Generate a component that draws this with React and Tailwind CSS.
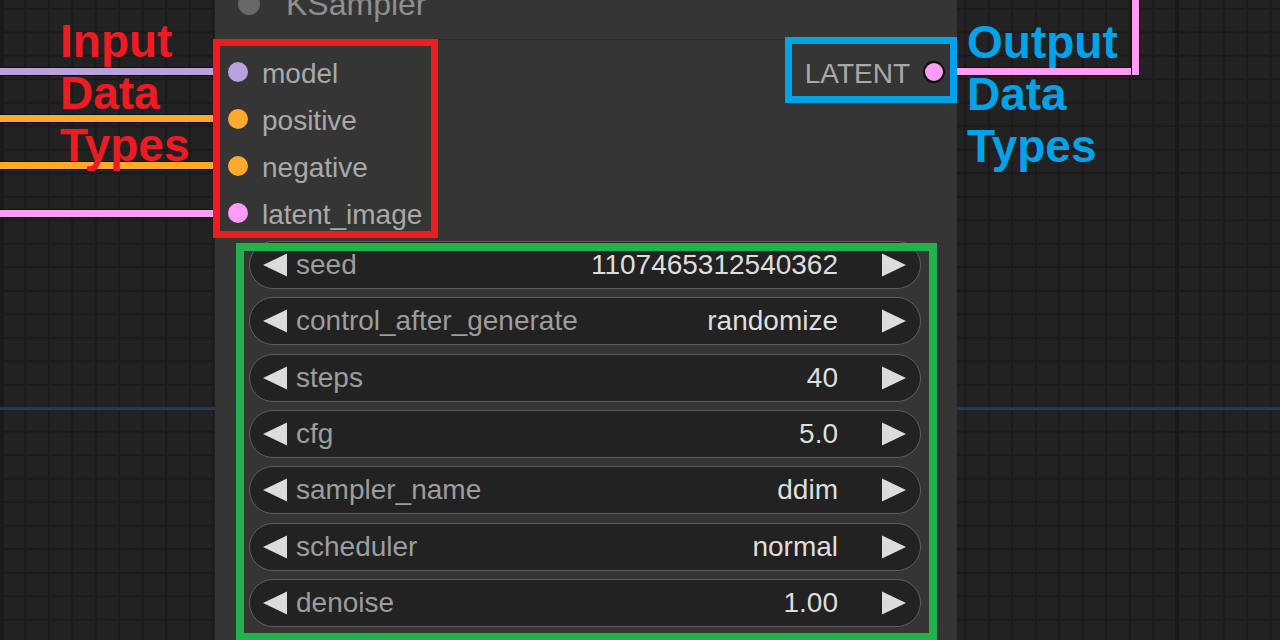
import React from 'react';

const inputs = [
  { name: 'model', color: 'bg-[#b8a1de]' },
  { name: 'positive', color: 'bg-[#ffa931]' },
  { name: 'negative', color: 'bg-[#ffa931]' },
  { name: 'latent_image', color: 'bg-[#ff9cf9]' },
];

const widgets = [
  { label: 'seed', value: '1107465312540362' },
  { label: 'control_after_generate', value: 'randomize' },
  { label: 'steps', value: '40' },
  { label: 'cfg', value: '5.0' },
  { label: 'sampler_name', value: 'ddim' },
  { label: 'scheduler', value: 'normal' },
  { label: 'denoise', value: '1.00' },
];

// links drawn on the canvas, under the node
const wires = [
  { top: 'top-[67px]', color: 'bg-[#b8a1de]' },
  { top: 'top-[114px]', color: 'bg-[#ffa931]' },
  { top: 'top-[161px]', color: 'bg-[#ffa931]' },
  { top: 'top-[209px]', color: 'bg-[#ff9cf9]' },
];

const Arrow = ({ dir }) => (
  <svg width="24" height="24" viewBox="0 0 24 24" className="shrink-0">
    {dir === 'left' ? (
      <polygon points="0,12 24,0.5 24,23.5" fill="#dcdcdc" />
    ) : (
      <polygon points="24,12 0,0.5 0,23.5" fill="#dcdcdc" />
    )}
  </svg>
);

const Widget = ({ label, value }) => (
  <div className="flex h-[48px] items-center rounded-full border-[1.5px] border-[#5e5e5e] bg-[#222222] pl-[13px] pr-[14px]">
    <Arrow dir="left" />
    <span className="ml-[9px] text-[#9d9d9d]">{label}</span>
    <span className="ml-auto text-[#dedede]">{value}</span>
    <span className="ml-[44px] flex">
      <Arrow dir="right" />
    </span>
  </div>
);

const KSamplerNode = () => (
  <div className="absolute left-[215px] top-[-32px] h-[720px] w-[742px] bg-[#353535] text-[28px] leading-none">
    <div className="flex h-[72px] items-center border-b border-[#2a2a2a] pl-[23px]">
      <span className="h-[22px] w-[22px] rounded-full bg-[#686868]" />
      <span className="ml-[26px] text-[32px] text-[#8f8f8f]">KSampler</span>
    </div>

    <div className="flex justify-between pt-[8px]">
      <div className="flex flex-col">
        {inputs.map((slot) => (
          <div key={slot.name} className="flex h-[47px] items-center pl-[13px]">
            <span className={`h-[20px] w-[20px] rounded-full ${slot.color}`} />
            <span className="ml-[14px] mt-[4px] text-[#a9a9a9]">{slot.name}</span>
          </div>
        ))}
      </div>
      <div className="flex h-[47px] items-center pr-[12px]">
        <span className="mt-[4px] text-[#a9a9a9]">LATENT</span>
        <span className="ml-[13px] h-[22px] w-[22px] rounded-full border-2 border-[#0b0b0b] bg-[#ff9cf9]" />
      </div>
    </div>

    <div className="flex flex-col gap-[8.33px] pl-[34px] pr-[36px] pt-[5px]">
      {widgets.map((w) => (
        <Widget key={w.label} label={w.label} value={w.value} />
      ))}
    </div>
  </div>
);

export default function App() {
  return (
    <div className="relative h-[640px] w-[1280px] overflow-hidden bg-[#222222] bg-[linear-gradient(90deg,#1a1a1a_2px,transparent_2px),linear-gradient(#1a1a1a_2px,transparent_2px)] bg-[length:23.5px_23.5px] bg-[position:0.8px_7.8px] font-['Liberation_Sans',Arial,sans-serif]">
      {/* major grid lines */}
      <div className="absolute left-0 top-0 h-full w-[4px] bg-[#191919]" />
      <div className="absolute left-[1175px] top-0 h-full w-[4px] bg-[#191919]" />
      <div className="absolute left-0 top-[407px] h-[3px] w-full bg-[#27375a]" />

      {wires.map((w, i) => (
        <div
          key={i}
          className={`absolute left-0 h-[9px] w-[240px] border-y-[1.5px] border-[#111] ${w.top} ${w.color}`}
        />
      ))}

      {/* output link */}
      <div className="absolute left-[940px] top-[67px] h-[9px] w-[200px] border-y-[1.5px] border-[#111] bg-[#ff9cf9]" />
      <div className="absolute left-[1131px] top-0 h-[76px] w-[9px] border-x-[1.5px] border-b-[1.5px] border-[#111] bg-[#ff9cf9]" />

      <KSamplerNode />

      {/* annotations */}
      <div className="absolute left-[213px] top-[39px] h-[199px] w-[225px] border-[7px] border-[#ed1c24]" />
      <div className="absolute left-[785px] top-[37px] h-[66px] w-[172px] border-[7px] border-[#00a2e8]" />
      <div className="absolute left-[236px] top-[243px] h-[398px] w-[701px] border-[8px] border-[#22b14c]" />

      <div className="absolute left-[60px] top-[15px] text-[46px] font-bold leading-[52px] text-[#ed1c24]">
        <div>Input</div>
        <div>Data</div>
        <div>Types</div>
      </div>
      <div className="absolute left-[967px] top-[16px] text-[46px] font-bold leading-[52px] text-[#00a2e8]">
        <div>Output</div>
        <div>Data</div>
        <div>Types</div>
      </div>
    </div>
  );
}
